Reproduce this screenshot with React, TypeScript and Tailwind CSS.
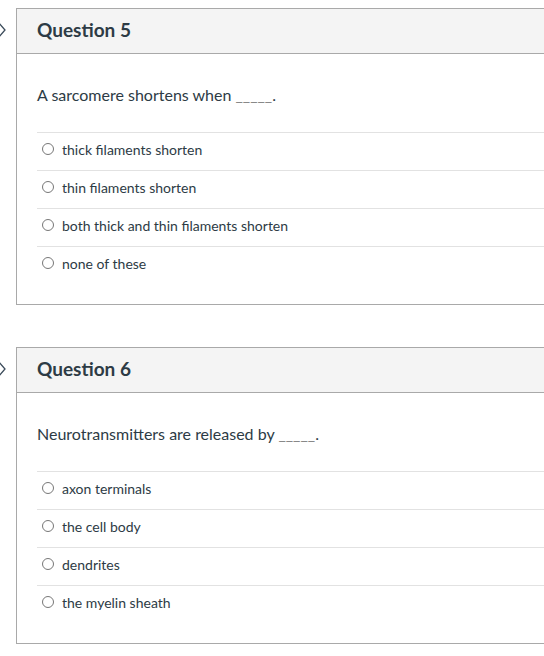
const questions = [
  {
    title: "Question 5",
    text: "A sarcomere shortens when",
    answers: [
      "thick filaments shorten",
      "thin filaments shorten",
      "both thick and thin filaments shorten",
      "none of these",
    ],
  },
  {
    title: "Question 6",
    text: "Neurotransmitters are released by",
    answers: ["axon terminals", "the cell body", "dendrites", "the myelin sheath"],
  },
];

function Chevron() {
  return (
    <svg width="12" height="18" viewBox="0 0 12 18" className="absolute -left-[22px] top-[12px]">
      <path d="M3 1 L10 9 L3 17" fill="none" stroke="#3b4b5a" strokeWidth="1.3" />
    </svg>
  );
}

function Question({ q }: { q: (typeof questions)[number] }) {
  return (
    <div className="relative w-[560px] border border-[#a9a9a9] bg-white">
      <Chevron />
      <div className="h-[45px] bg-[#f4f4f4] border-b border-[#a9a9a9] pl-[20px] pb-[2px] flex items-center">
        <h2 className="text-[19px] font-bold text-[#2d3b45]">{q.title}</h2>
      </div>
      <div className="pl-[20px] pt-[31px] pb-[20px]">
        <p className="text-[16px] leading-[20px] text-[#2d3b45]">
          {q.text} <span className="text-[#888]">_____</span>.
        </p>
        <ul className="mt-[27px]">
          {q.answers.map((a) => (
            <li
              key={a}
              className="h-[38px] border-t border-[#e2e2e2] flex items-center gap-[8px] pl-[5px] pb-[5px]"
            >
              <span className="w-[12px] h-[12px] rounded-full border border-[#777] bg-white" />
              <span className="text-[14px] text-[#2d3b45]">{a}</span>
            </li>
          ))}
        </ul>
      </div>
    </div>
  );
}

export default function App() {
  return (
    <div
      className="w-[544px] h-[656px] overflow-hidden bg-white pt-[8px] pl-[16px] flex flex-col gap-[42px]"
      style={{ fontFamily: "Lato, 'Noto Sans', sans-serif" }}
    >
      {questions.map((q) => (
        <Question key={q.title} q={q} />
      ))}
    </div>
  );
}
